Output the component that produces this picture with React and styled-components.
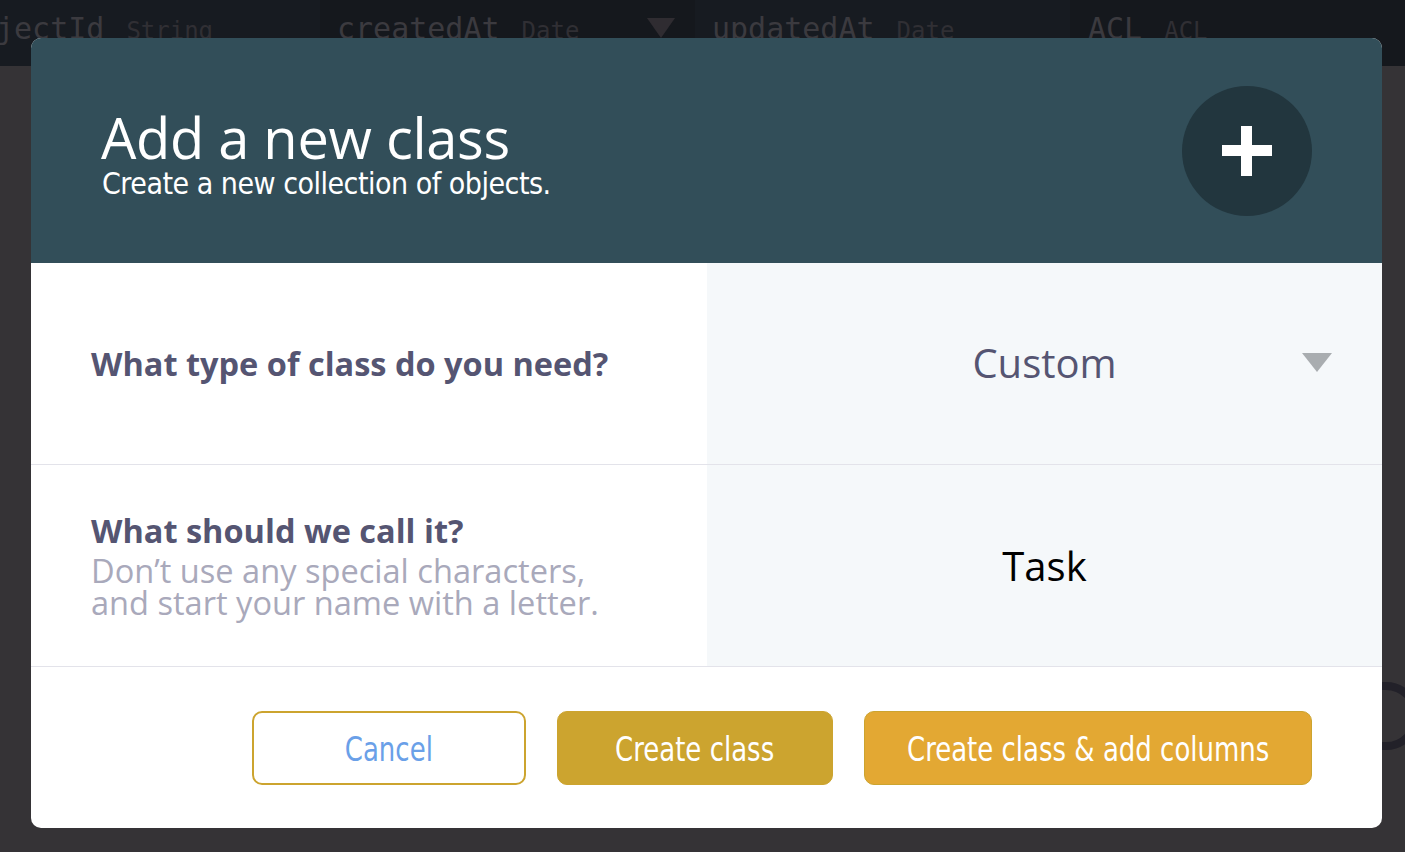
import * as React from "react";
import styled, { createGlobalStyle } from "styled-components";

const colors = {
  overlay: "#353336",
  tableHead: "#171b21",
  tableHeadDark: "#15181d",
  ghostText: "#3b3a3f",
  header: "#324e59",
  headerIcon: "#22363e",
  label: "#555572",
  hint: "#a9a9bb",
  field: "#f5f8fa",
  line: "#e3e3ea",
  gold: "#cca42f",
  amber: "#e3a833",
  link: "#6aa0e8",
};

const condensed = `"DejaVu Sans Condensed", "DejaVu Sans", sans-serif`;

const GlobalStyle = createGlobalStyle`
  html, body {
    margin: 0;
    padding: 0;
    height: 100%;
    background: ${colors.overlay};
    font-family: "Open Sans", sans-serif;
    overflow: hidden;
  }
`;

const Page = styled.div`
  position: relative;
  width: 1405px;
  height: 852px;
  background: ${colors.overlay};
  overflow: hidden;
`;

const TableHead = styled.div`
  display: flex;
  height: 66px;
  background: ${colors.tableHead};
`;

const HeadCell = styled.div`
  position: relative;
  display: flex;
  align-items: baseline;
  gap: 22px;
  width: ${(p) => p.$width}px;
  flex-shrink: 0;
  box-sizing: border-box;
  padding: 11px 0 0 ${(p) => p.$indent}px;
  background: ${(p) => (p.$dark ? colors.tableHeadDark : colors.tableHead)};
  font-family: "DejaVu Sans Mono", "Liberation Mono", monospace;
  color: ${colors.ghostText};
  white-space: nowrap;
  overflow: hidden;
`;

const HeadName = styled.span`
  font-size: 30px;
  margin-left: ${(p) => p.$shift || 0}px;
`;

const HeadType = styled.span`
  font-size: 24px;
  color: #302f34;
`;

const SortArrow = styled.span`
  position: absolute;
  left: 327px;
  top: 18px;
  width: 0;
  height: 0;
  border-left: 14px solid transparent;
  border-right: 14px solid transparent;
  border-top: 20px solid #2f2c31;
`;

const Backdrop = styled.svg`
  position: absolute;
  right: 0;
  top: 680px;
`;

const Modal = styled.div`
  position: absolute;
  left: 31px;
  top: 38px;
  width: 1351px;
  height: 790px;
  background: #fff;
  border-radius: 10px;
  overflow: hidden;
  display: flex;
  flex-direction: column;
`;

const Header = styled.div`
  height: 225px;
  flex-shrink: 0;
  background: ${colors.header};
  display: flex;
  align-items: center;
  justify-content: space-between;
  padding: 0 70px;
  box-sizing: border-box;
`;

const TitleBlock = styled.div`
  color: #fff;
  padding-top: 6px;
`;

const Title = styled.h1`
  margin: 0;
  font-weight: 400;
  font-size: 56px;
  line-height: 56px;
  letter-spacing: -0.3px;
`;

const Subtitle = styled.div`
  font-family: ${condensed};
  font-size: 30px;
  line-height: 34px;
  letter-spacing: -0.5px;
  margin: 2px 0 -2px 1px;
`;

const IconCircle = styled.div`
  width: 130px;
  height: 130px;
  border-radius: 50%;
  background: ${colors.headerIcon};
  display: flex;
  align-items: center;
  justify-content: center;
`;

const Row = styled.div`
  display: grid;
  grid-template-columns: 676px 1fr;
  height: 201px;
  border-bottom: 1px solid ${colors.line};
  flex-shrink: 0;
`;

const LabelCell = styled.div`
  display: flex;
  flex-direction: column;
  justify-content: center;
  padding-left: 60px;
`;

const Label = styled.div`
  font-weight: 700;
  font-size: 32.5px;
  line-height: 38px;
  color: ${colors.label};
`;

const Hint = styled.div`
  font-size: 32.6px;
  line-height: 32px;
  color: ${colors.hint};
  margin-top: 5px;
`;

const FieldCell = styled.div`
  position: relative;
  background: ${colors.field};
  display: flex;
  align-items: center;
  justify-content: center;
`;

const FieldValue = styled.div`
  font-size: 40px;
  color: ${(p) => (p.$muted ? colors.label : "#000")};
  margin-top: ${(p) => (p.$muted ? "-2px" : "0")};
`;

const Caret = styled.span`
  position: absolute;
  right: 50px;
  top: 90px;
  width: 0;
  height: 0;
  border-left: 15px solid transparent;
  border-right: 15px solid transparent;
  border-top: 19px solid #a9adb0;
`;

const Footer = styled.div`
  flex: 1;
  display: flex;
  align-items: center;
  justify-content: flex-end;
  gap: 31px;
  padding-right: 70px;
`;

const Button = styled.button`
  height: 74px;
  width: ${(p) => p.$width}px;
  box-sizing: border-box;
  border-radius: 10px;
  border: ${(p) => (p.$variant === "outline" ? "2px" : "1px")} solid ${colors.gold};
  background: ${(p) =>
    p.$variant === "outline" ? "#fff" : p.$variant === "primary" ? colors.gold : colors.amber};
  color: ${(p) => (p.$variant === "outline" ? colors.link : "#fff")};
  font-family: ${condensed};
  font-size: 34px;
  padding: 0;
  white-space: nowrap;
  cursor: pointer;
`;

const ButtonText = styled.span`
  display: inline-block;
  transform: scaleX(0.85);
  margin-top: 2px;
`;

function PlusIcon() {
  return (
    <svg width="50" height="50" viewBox="0 0 50 50">
      <rect x="19" y="0" width="11" height="50" fill="#fff" />
      <rect x="0" y="19" width="50" height="11" fill="#fff" />
    </svg>
  );
}

export default function App() {
  return (
    <>
      <GlobalStyle />
      <Page>
        <TableHead>
          <HeadCell $width={320} $indent={0}>
            <HeadName $shift={-4}>jectId</HeadName>
            <HeadType>String</HeadType>
          </HeadCell>
          <HeadCell $width={375} $indent={17} $dark>
            <HeadName>createdAt</HeadName>
            <HeadType>Date</HeadType>
            <SortArrow />
          </HeadCell>
          <HeadCell $width={375} $indent={17}>
            <HeadName>updatedAt</HeadName>
            <HeadType>Date</HeadType>
          </HeadCell>
          <HeadCell $width={335} $indent={18} $dark>
            <HeadName>ACL</HeadName>
            <HeadType>ACL</HeadType>
          </HeadCell>
        </TableHead>
        <Backdrop width="23" height="75" viewBox="0 0 23 75">
          <path d="M0 6 H4 A30 30 0 0 1 4 66 H0" fill="none" stroke="#222129" strokeWidth="8" />
        </Backdrop>

        <Modal>
          <Header>
            <TitleBlock>
              <Title>Add a new class</Title>
              <Subtitle>Create a new collection of objects.</Subtitle>
            </TitleBlock>
            <IconCircle>
              <PlusIcon />
            </IconCircle>
          </Header>

          <Row>
            <LabelCell>
              <Label>What type of class do you need?</Label>
            </LabelCell>
            <FieldCell>
              <FieldValue $muted>Custom</FieldValue>
              <Caret />
            </FieldCell>
          </Row>

          <Row>
            <LabelCell>
              <Label>What should we call it?</Label>
              <Hint>
                Don’t use any special characters,
                <br />
                and start your name with a letter.
              </Hint>
            </LabelCell>
            <FieldCell>
              <FieldValue>Task</FieldValue>
            </FieldCell>
          </Row>

          <Footer>
            <Button $variant="outline" $width={274}>
              <ButtonText>Cancel</ButtonText>
            </Button>
            <Button $variant="primary" $width={276}>
              <ButtonText>Create class</ButtonText>
            </Button>
            <Button $variant="accent" $width={448}>
              <ButtonText>Create class &amp; add columns</ButtonText>
            </Button>
          </Footer>
        </Modal>
      </Page>
    </>
  );
}
